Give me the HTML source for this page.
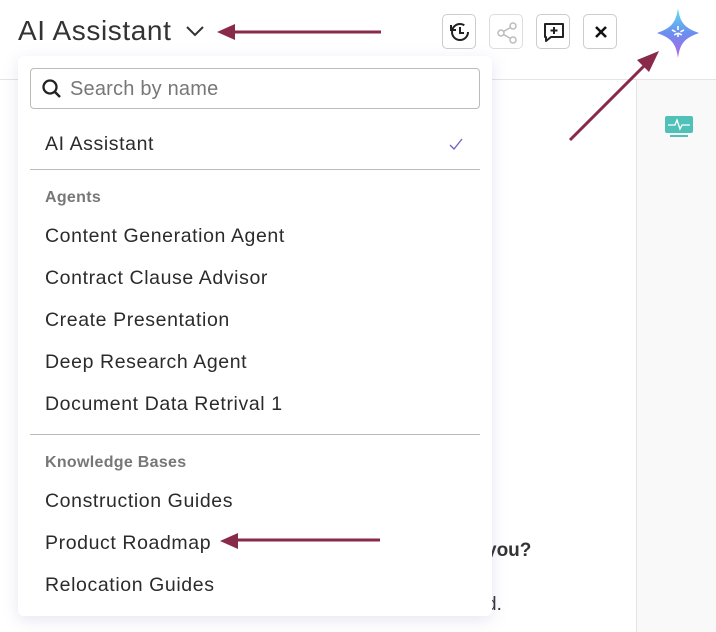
<!DOCTYPE html>
<html><head><style>
*{margin:0;padding:0;box-sizing:border-box}
body{width:716px;height:632px;overflow:hidden;background:#fff;font-family:"Liberation Sans",sans-serif;position:relative;color:#2b2b2b}
.hdr{position:absolute;left:0;top:0;width:716px;height:80px;border-bottom:1px solid #e4e4e4}
.title{position:absolute;left:18px;top:15px;font-size:28px;color:#333;letter-spacing:0.6px}
.side{position:absolute;left:636px;top:80px;width:80px;height:552px;background:#f9f9f9;border-left:1px solid #e4e4e4}
.btn{position:absolute;top:14px;width:34px;height:35px;border:1px solid #ccc;border-radius:5px;background:#fff}
.dd{position:absolute;left:18px;top:56px;width:474px;height:560px;background:#fff;border-radius:6px;box-shadow:0 4px 16px rgba(120,110,180,0.18)}
.search{position:absolute;left:12px;top:12px;width:450px;height:41px;border:1px solid #bbb;border-radius:4px}
.search span{position:absolute;left:39px;top:9px;font-size:20px;color:#777;letter-spacing:0.2px}
.it{position:absolute;left:27px;font-size:19.5px;color:#2b2b2b;letter-spacing:0.6px}
.hd{position:absolute;left:27px;font-size:16px;color:#777;font-weight:bold;letter-spacing:0.3px}
.sep{position:absolute;left:12px;width:450px;height:1px;background:#bbb}
.bt{position:absolute;font-size:19px;font-weight:bold;color:#333}
</style></head><body>
<div class="hdr"></div>
<div class="title">AI Assistant</div>
<svg style="position:absolute;left:185px;top:24px" width="20" height="14"><path d="M2 3l8 8 8-8" fill="none" stroke="#333" stroke-width="2"/></svg>
<svg style="position:absolute;left:215px;top:22px" width="170" height="22"><path d="M166 10H14" stroke="#8a2a4a" stroke-width="3"/><path d="M2 10L20 2v16z" fill="#8a2a4a"/></svg>
<div class="btn" style="left:442px"><svg width="34" height="35"><circle cx="17" cy="17" r="8" fill="none" stroke="#222" stroke-width="2" stroke-dasharray="42 8"/><path d="M17 12v6h4M8 10v5h5" fill="none" stroke="#222" stroke-width="2"/></svg></div>
<div class="btn" style="left:489px;border-color:#ddd"><svg width="34" height="35"><circle cx="11" cy="18" r="3" fill="none" stroke="#bbb" stroke-width="1.5"/><circle cx="23" cy="11" r="3" fill="none" stroke="#bbb" stroke-width="1.5"/><circle cx="23" cy="25" r="3" fill="none" stroke="#bbb" stroke-width="1.5"/><path d="M13.5 16.5l7-4M13.5 19.5l7 4" stroke="#bbb" stroke-width="1.5"/></svg></div>
<div class="btn" style="left:536px"><svg width="34" height="35"><path d="M8 9h18v13H14l-5 4v-4H8z" fill="none" stroke="#222" stroke-width="2" stroke-linejoin="round"/><path d="M17 12v7M13.5 15.5h7" stroke="#222" stroke-width="2"/></svg></div>
<div class="btn" style="left:583px"><svg width="34" height="35"><path d="M12 12l10 10M22 12L12 22" stroke="#111" stroke-width="2.5"/></svg></div>
<svg style="position:absolute;left:655px;top:8px" width="46" height="50"><defs><linearGradient id="g" x1="0" y1="0" x2="0" y2="1"><stop offset="0" stop-color="#5ee0f0"/><stop offset=".5" stop-color="#6b8ef0"/><stop offset="1" stop-color="#b066e0"/></linearGradient></defs><path d="M23 0C25 15 30 20 44 25 30 30 25 35 23 50 21 35 16 30 2 25 16 20 21 15 23 0z" fill="url(#g)"/><path d="M23 18v14M17 22l12 6M29 22l-12 6" stroke="#fff" stroke-width="1.6" stroke-dasharray="4 3"/></svg>
<svg style="position:absolute;left:565px;top:48px" width="100" height="96"><path d="M5 92L82 15" stroke="#8a2a4a" stroke-width="3"/><path d="M94 3L72 12l12 12z" fill="#8a2a4a"/></svg>
<div class="side"></div>
<svg style="position:absolute;left:664px;top:115px" width="30" height="24"><rect x="1" y="1" width="28" height="17" rx="2" fill="#4fc1b8"/><path d="M4 10h7l2-5 3 9 2-4h8" fill="none" stroke="#fff" stroke-width="1.3"/><rect x="6" y="20" width="18" height="2" fill="#4fc1b8"/></svg>
<div class="bt" style="left:486px;top:540px">you?</div>
<div class="bt" style="left:486px;top:594px;font-weight:normal">d.</div>
<div class="dd">
<div class="search"><svg style="position:absolute;left:10px;top:9px" width="22" height="22"><circle cx="9" cy="9" r="6.5" fill="none" stroke="#222" stroke-width="2.3"/><path d="M14 14l5 5" stroke="#222" stroke-width="2.5"/></svg><span>Search by name</span></div>
<div class="it" style="top:77px">AI Assistant</div>
<svg style="position:absolute;left:430px;top:80px" width="16" height="16"><path d="M2 9l4 4 8-10" fill="none" stroke="#7060c0" stroke-width="1.3"/></svg>
<div class="sep" style="top:113px"></div>
<div class="hd" style="top:133px">Agents</div>
<div class="it" style="top:169px">Content Generation Agent</div>
<div class="it" style="top:211px">Contract Clause Advisor</div>
<div class="it" style="top:253px">Create Presentation</div>
<div class="it" style="top:295px">Deep Research Agent</div>
<div class="it" style="top:337px">Document Data Retrival 1</div>
<div class="sep" style="top:378px"></div>
<div class="hd" style="top:398px">Knowledge Bases</div>
<div class="it" style="top:434px">Construction Guides</div>
<div class="it" style="top:476px">Product Roadmap</div>
<div class="it" style="top:518px">Relocation Guides</div>
</div>
<svg style="position:absolute;left:218px;top:530px" width="165" height="22"><path d="M162 10H14" stroke="#8a2a4a" stroke-width="3"/><path d="M2 11L20 3v16z" fill="#8a2a4a"/></svg>
</body></html>
